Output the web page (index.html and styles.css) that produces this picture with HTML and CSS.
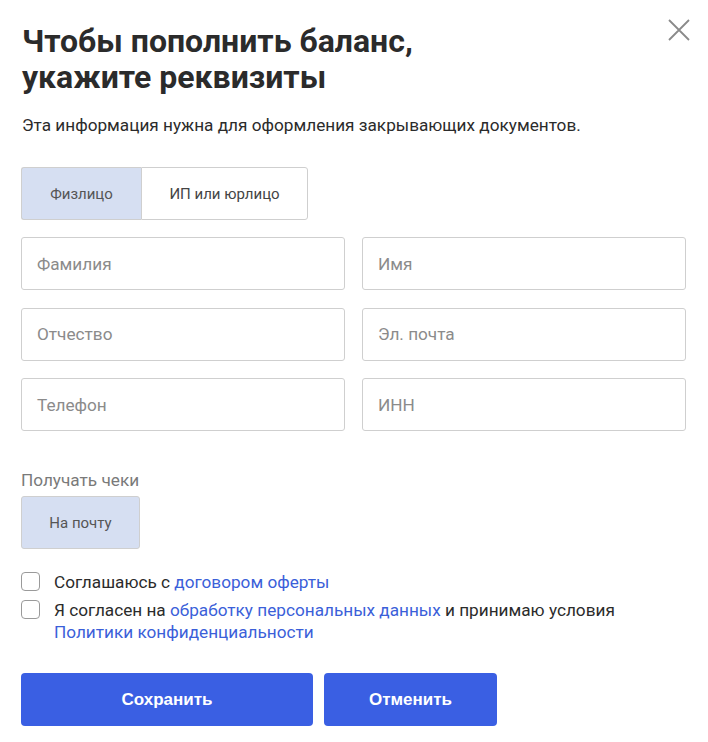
FILE: index.html
```html
<!DOCTYPE html>
<html lang="ru">
<head>
<meta charset="utf-8">
<link rel="stylesheet" href="styles.css">
</head>
<body>
<div class="modal">
  <button class="close" aria-label="Закрыть">
    <svg width="22" height="22" viewBox="0 0 22 22"><path d="M1 1 L21 21 M21 1 L1 21" stroke="#8a8a8a" stroke-width="1.8" fill="none"/></svg>
  </button>
  <h1 class="title">Чтобы пополнить баланс,<br>укажите реквизиты</h1>
  <p class="subtitle">Эта информация нужна для оформления закрывающих документов.</p>
  <div class="segmented">
    <div class="seg seg-active seg-first">Физлицо</div>
    <div class="seg seg-second">ИП или юрлицо</div>
  </div>
  <div class="grid">
    <div class="field">Фамилия</div>
    <div class="field">Имя</div>
    <div class="field">Отчество</div>
    <div class="field">Эл. почта</div>
    <div class="field">Телефон</div>
    <div class="field">ИНН</div>
  </div>
  <div class="label">Получать чеки</div>
  <div class="seg seg-active seg-single">На почту</div>
  <div class="checks">
    <div class="check"><span class="box"></span><span class="ctext">Соглашаюсь с <a class="link">договором оферты</a></span></div>
    <div class="check"><span class="box"></span><span class="ctext">Я согласен на <a class="link">обработку персональных данных</a> и принимаю условия<br><a class="link">Политики конфиденциальности</a></span></div>
  </div>
  <div class="actions">
    <button class="btn btn-save">Сохранить</button>
    <button class="btn btn-cancel">Отменить</button>
  </div>
</div>
</body>
</html>
```
FILE: styles.css
```css
* { box-sizing: border-box; }
html, body { margin: 0; padding: 0; background: #fff; }
body { font-family: Roboto, "Noto Sans", sans-serif; color: #2b2b2b; }
.modal { position: relative; padding: 23px 22px 0 21px; width: 708px; }
.close { position: absolute; top: 19px; left: 668px; background: none; border: 0; padding: 0; width: 22px; height: 22px; }
.title { margin: 0; font-size: 32px; line-height: 36px; font-weight: 700; color: #2b2b2b; padding-left: 1px; }
.subtitle { margin: 20px 0 0 1px; font-size: 17.2px; line-height: 20px; color: #2b2b2b; }
.segmented { display: flex; margin-top: 32px; }
.seg { height: 53px; display: flex; align-items: center; justify-content: center; font-size: 15px; color: #444; border: 1px solid #cfcfcf; background: #fff; }
.seg-active { background: #d6dff2; color: #555; }
.seg-first { width: 120px; border-radius: 3px 0 0 3px; border-right: 0; }
.seg-second { width: 167px; border-radius: 0 3px 3px 0; }
.grid { display: grid; grid-template-columns: 324px 324px; column-gap: 17px; row-gap: 17.5px; margin-top: 17px; }
.field { height: 53px; border: 1px solid #cfcfcf; border-radius: 3px; display: flex; align-items: center; padding-left: 15px; font-size: 17.2px; color: #8b8b8b; }
.label { margin-top: 39px; font-size: 17.2px; color: #7a7a7a; line-height: 20px; }
.seg-single { width: 119px; margin-top: 6px; border-radius: 3px; }
.checks { margin-top: 22px; display: flex; flex-direction: column; gap: 6px; }
.check { display: flex; align-items: flex-start; gap: 14px; font-size: 17.2px; line-height: 22px; color: #2b2b2b; }
.box { width: 19px; height: 19px; border: 1px solid #9a9a9a; border-radius: 4px; flex: none; margin-top: 1px; }
.link { color: #3b5fd9; text-decoration: none; }
.actions { display: flex; gap: 11px; margin-top: 30px; }
.btn { height: 53px; border: 0; border-radius: 4px; background: #3a5fe3; color: #fff; font-family: "Liberation Sans", Arial, sans-serif; font-weight: 700; font-size: 17px; }
.btn-save { width: 292px; }
.btn-cancel { width: 173px; }
```
